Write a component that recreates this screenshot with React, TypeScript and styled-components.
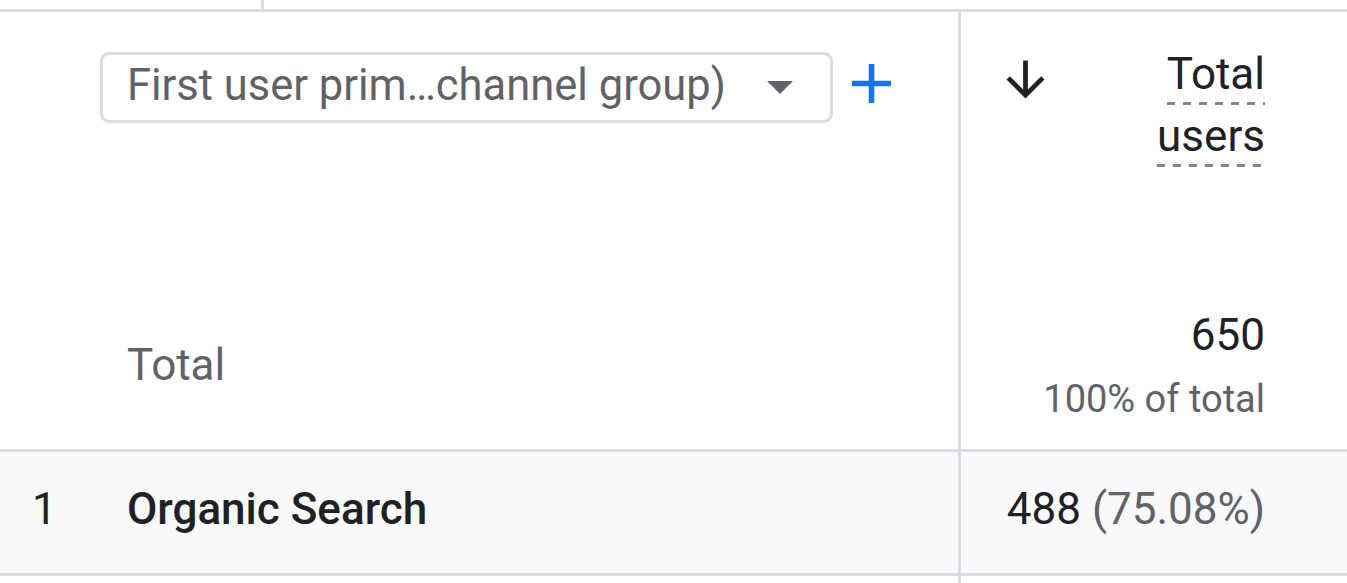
import React from "react";
import styled, { createGlobalStyle } from "styled-components";

const GlobalStyle = createGlobalStyle`
  html, body {
    margin: 0;
    padding: 0;
    background: #ffffff;
    overflow: hidden;
  }
  body {
    font-family: Roboto, "Liberation Sans", Arial, sans-serif;
    color: #202124;
  }
`;

const BORDER = "3px solid #dadce0";

const Table = styled.div`
  width: 1347px;
  height: 583px;
  overflow: hidden;
`;

const TopStrip = styled.div`
  display: grid;
  grid-template-columns: 264px 1fr;
  height: 12px;
  border-bottom: ${BORDER};
  box-sizing: border-box;
`;

const TopCell = styled.div<{ $divider?: boolean }>`
  border-right: ${(p) => (p.$divider ? BORDER : "none")};
`;

const Row = styled.div<{ $shaded?: boolean; $bordered?: boolean }>`
  display: grid;
  grid-template-columns: 961px 1fr;
  background: ${(p) => (p.$shaded ? "#f8f9fa" : "#ffffff")};
  border-bottom: ${(p) => (p.$bordered ? BORDER : "none")};
`;

const DimCell = styled.div<{ $pad?: string; $align?: string }>`
  box-sizing: border-box;
  border-right: ${BORDER};
  display: flex;
  align-items: ${(p) => p.$align || "center"};
  padding: ${(p) => p.$pad || "0"};
`;

const MetricCell = styled.div<{ $pad?: string }>`
  display: flex;
  align-items: center;
  justify-content: flex-end;
  padding: ${(p) => p.$pad || "0 82px 0 0"};
`;

const HeaderRow = styled(Row)`
  height: 271px;
`;

const HeaderMetric = styled.div`
  display: flex;
  justify-content: space-between;
  align-items: flex-start;
  padding: 31px 82px 0 36px;
`;

const Selector = styled.div`
  box-sizing: border-box;
  width: 733px;
  height: 71px;
  border: ${BORDER};
  border-radius: 9px;
  display: flex;
  align-items: center;
  justify-content: space-between;
  padding: 0 37px 0 24px;
  font-size: 43.5px;
  line-height: 60px;
  color: #5f6368;
  white-space: nowrap;
`;

const SelectorText = styled.span`
  margin-top: -4px;
`;

const AddButton = styled.button`
  border: none;
  background: none;
  padding: 0;
  margin: -2px 0 0 5px;
  display: flex;
  cursor: pointer;
`;

const SortIcon = styled.svg`
  margin-top: 8px;
  fill: #202124;
`;

const HeaderTitle = styled.div`
  display: flex;
  flex-direction: column;
  align-items: flex-end;
  font-size: 44px;
  line-height: 62px;
  color: #202124;
`;

const DashedWord = styled.span`
  display: inline-block;
  background-image: linear-gradient(to right, #80868b 50%, transparent 50%);
  background-size: 16px 3px;
  background-repeat: repeat-x;
  background-position: left bottom;
`;

const TotalsRow = styled(Row)`
  height: 166px;
`;

const TotalLabel = styled.div`
  font-size: 44px;
  line-height: 48px;
  margin-top: -3px;
  color: #5f6368;
`;

const TotalsBlock = styled.div`
  display: flex;
  flex-direction: column;
  align-items: flex-end;
  gap: 18px;
`;

const BigNumber = styled.div`
  font-size: 44px;
  line-height: 48px;
  color: #202124;
`;

const SubText = styled.div`
  font-size: 38px;
  line-height: 44px;
  color: #5f6368;
`;

const DataRow = styled(Row)`
  height: 121px;
`;

const Index = styled.div`
  width: 95px;
  font-size: 44px;
  color: #202124;
`;

const DimValue = styled.div`
  font-size: 44px;
  font-weight: 500;
  color: #202124;
`;

const Value = styled.div`
  font-size: 44px;
  color: #202124;
`;

const Share = styled.span`
  color: #5f6368;
`;

const FillerRow = styled(Row)`
  height: 20px;
`;

export default function App() {
  return (
    <>
      <GlobalStyle />
      <Table>
        <TopStrip>
          <TopCell $divider />
          <TopCell />
        </TopStrip>

        <HeaderRow>
          <DimCell $pad="40px 0 0 100px" $align="flex-start">
            <Selector>
              <SelectorText>First user prim…channel group)</SelectorText>
              <svg width="26" height="13" viewBox="0 0 26 13">
                <polygon points="0,0 26,0 13,13" fill="#5f6368" />
              </svg>
            </Selector>
            <AddButton aria-label="Add dimension">
              <svg width="67" height="67" viewBox="0 0 24 24" fill="#1a73e8">
                <path d="M19 13h-6v6h-2v-6H5v-2h6V5h2v6h6v2z" />
              </svg>
            </AddButton>
          </DimCell>
          <HeaderMetric>
            <SortIcon width="57" height="57" viewBox="0 0 24 24">
              <path d="M20 12l-1.41-1.41L13 16.17V4h-2v12.17l-5.58-5.59L4 12l8 8 8-8z" />
            </SortIcon>
            <HeaderTitle>
              <DashedWord>Total</DashedWord>
              <DashedWord>users</DashedWord>
            </HeaderTitle>
          </HeaderMetric>
        </HeaderRow>

        <TotalsRow $bordered>
          <DimCell $pad="0 0 0 127px">
            <TotalLabel>Total</TotalLabel>
          </DimCell>
          <MetricCell>
            <TotalsBlock>
              <BigNumber>650</BigNumber>
              <SubText>100% of total</SubText>
            </TotalsBlock>
          </MetricCell>
        </TotalsRow>

        <DataRow $shaded $bordered>
          <DimCell $pad="0 0 8px 32px">
            <Index>1</Index>
            <DimValue>Organic Search</DimValue>
          </DimCell>
          <MetricCell $pad="0 82px 8px 0">
            <Value>
              488 <Share>(75.08%)</Share>
            </Value>
          </MetricCell>
        </DataRow>

        <FillerRow>
          <DimCell />
          <MetricCell />
        </FillerRow>
      </Table>
    </>
  );
}
